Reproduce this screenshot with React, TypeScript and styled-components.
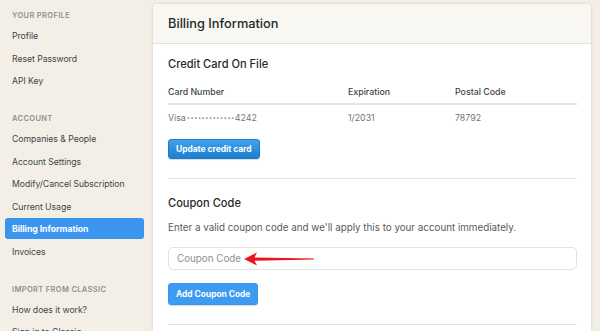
import React from 'react';
import styled, { createGlobalStyle } from 'styled-components';

const GlobalStyle = createGlobalStyle`
  html, body {
    margin: 0;
    padding: 0;
    background: #f4efe6;
    font-family: Inter, "Noto Sans", sans-serif;
    overflow: hidden;
  }
`;

const Page = styled.div`
  display: flex;
  width: 600px;
  height: 331px;
  overflow: hidden;
  background: #f4efe6;
`;

const Sidebar = styled.nav`
  width: 152px;
  flex-shrink: 0;
  padding: 10px 8px 0 5px;
  box-sizing: border-box;
`;

const SectionTitle = styled.div<{ $first?: boolean }>`
  font-size: 7.5px;
  font-weight: 600;
  letter-spacing: 0.35px;
  color: #8c9191;
  text-transform: uppercase;
  padding-left: 7px;
  height: 12px;
  line-height: 12px;
  margin-top: ${p => (p.$first ? '0' : '22px')};
  margin-bottom: 3px;
`;

const NavItem = styled.a<{ $active?: boolean }>`
  display: block;
  height: 21px;
  line-height: 22px;
  margin-bottom: 1.5px;
  padding-left: 7px;
  border-radius: 3px;
  font-size: 8.7px;
  letter-spacing: -0.05px;
  text-decoration: none;
  color: ${p => (p.$active ? '#fff' : '#3f4545')};
  font-weight: ${p => (p.$active ? 700 : 400)};
  background: ${p => (p.$active ? '#3a95ee' : 'transparent')};
  white-space: nowrap;
`;

const Card = styled.main`
  margin-top: 3px;
  width: 440px;
  background: #fff;
  border: 1px solid #e4e1da;
  border-bottom: none;
  border-radius: 5px 5px 0 0;
  box-shadow: 0 0 3px rgba(0, 0, 0, 0.08);
  box-sizing: border-box;
`;

const CardHeader = styled.header`
  height: 39px;
  background: #f9f7f2;
  border-bottom: 1px solid #e3e0da;
  border-radius: 5px 5px 0 0;
  display: flex;
  align-items: center;
  padding-left: 15px;
  font-size: 12.8px;
  font-weight: 500;
  color: #1f2a2a;
`;

const Body = styled.div`
  padding: 0 14px 0 15px;
`;

const Section = styled.section<{ $top: number }>`
  border-bottom: 1px solid #e6e4e0;
  padding-top: ${p => p.$top}px;
  padding-bottom: 19px;
`;

const SectionHeading = styled.h3`
  margin: 0;
  font-size: 11.1px;
  font-weight: 500;
  color: #1f2a2a;
  height: 16px;
  line-height: 16px;
`;

const Table = styled.div`
  margin-top: 8px;
`;

const TableRow = styled.div<{ $head?: boolean }>`
  display: grid;
  grid-template-columns: 180px 107px 1fr;
  height: ${p => (p.$head ? '23px' : '24px')};
  align-items: center;
  font-size: 8.8px;
  color: ${p => (p.$head ? '#3f4545' : '#6f7575')};
  font-weight: ${p => (p.$head ? 500 : 400)};
  border-bottom: ${p => (p.$head ? '2px solid #e6e4e0' : 'none')};
`;

const Dots = styled.span`
  font-size: 5.5px;
  letter-spacing: 0.6px;
  color: #8a8f8f;
  vertical-align: 1px;
  margin-left: 1px;
`;

const ButtonRow = styled.div<{ $top: number }>`
  display: flex;
  margin-top: ${p => p.$top}px;
`;

const Button = styled.button<{ $flat?: boolean }>`
  display: inline-flex;
  align-items: center;
  height: ${p => (p.$flat ? '22px' : '20px')};
  padding: 0 7px;
  border: 1px solid ${p => (p.$flat ? '#3a95ee' : '#1d7bc8')};
  border-radius: 3px;
  background: ${p => (p.$flat ? '#3d9bf2' : 'linear-gradient(#3fa2ea, #1c7fd0)')};
  color: #fff;
  font-family: inherit;
  font-size: 8.4px;
  font-weight: 700;
  box-shadow: 0 1px 1px rgba(0, 0, 0, 0.15);
`;

const Paragraph = styled.p`
  margin: 10px 0 0;
  font-size: 9.8px;
  color: #555b5b;
  height: 14px;
  line-height: 14px;
`;

const InputWrap = styled.div`
  position: relative;
  margin-top: 12px;
`;

const Input = styled.input`
  display: block;
  width: 100%;
  height: 23px;
  box-sizing: border-box;
  border: 1px solid #e2e2e0;
  border-radius: 5px;
  padding: 0 8px;
  font-family: inherit;
  font-size: 9.8px;
  color: #333;
  outline: none;
  &::placeholder {
    color: #8d9292;
  }
`;

const Arrow = styled.svg`
  position: absolute;
  left: 75px;
  top: 4px;
  pointer-events: none;
`;

export default function App() {
  return (
    <>
      <GlobalStyle />
      <Page>
        <Sidebar>
          <SectionTitle $first>Your Profile</SectionTitle>
          <NavItem>Profile</NavItem>
          <NavItem>Reset Password</NavItem>
          <NavItem>API Key</NavItem>
          <SectionTitle>Account</SectionTitle>
          <NavItem>Companies &amp; People</NavItem>
          <NavItem>Account Settings</NavItem>
          <NavItem>Modify/Cancel Subscription</NavItem>
          <NavItem>Current Usage</NavItem>
          <NavItem $active>Billing Information</NavItem>
          <NavItem>Invoices</NavItem>
          <SectionTitle>Import from Classic</SectionTitle>
          <NavItem>How does it work?</NavItem>
          <NavItem>Sign in to Classic</NavItem>
        </Sidebar>
        <Card>
          <CardHeader>Billing Information</CardHeader>
          <Body>
            <Section $top={12}>
              <SectionHeading>Credit Card On File</SectionHeading>
              <Table>
                <TableRow $head>
                  <span>Card Number</span>
                  <span>Expiration</span>
                  <span>Postal Code</span>
                </TableRow>
                <TableRow>
                  <span>Visa<Dots>•••••••••••••</Dots>4242</span>
                  <span>1/2031</span>
                  <span>78792</span>
                </TableRow>
              </Table>
              <ButtonRow $top={10}>
                <Button>Update credit card</Button>
              </ButtonRow>
            </Section>
            <Section $top={16}>
              <SectionHeading>Coupon Code</SectionHeading>
              <Paragraph>Enter a valid coupon code and we'll apply this to your account immediately.</Paragraph>
              <InputWrap>
                <Input placeholder="Coupon Code" />
                <Arrow width="72" height="16" viewBox="0 0 72 16">
                  <path d="M1 8 L14 1.5 L11.5 6.4 L71 7.6 L71 8.4 L11.5 9.8 L14 14.5 Z" fill="#e8151b" />
                </Arrow>
              </InputWrap>
              <ButtonRow $top={13}>
                <Button $flat>Add Coupon Code</Button>
              </ButtonRow>
            </Section>
          </Body>
        </Card>
      </Page>
    </>
  );
}
